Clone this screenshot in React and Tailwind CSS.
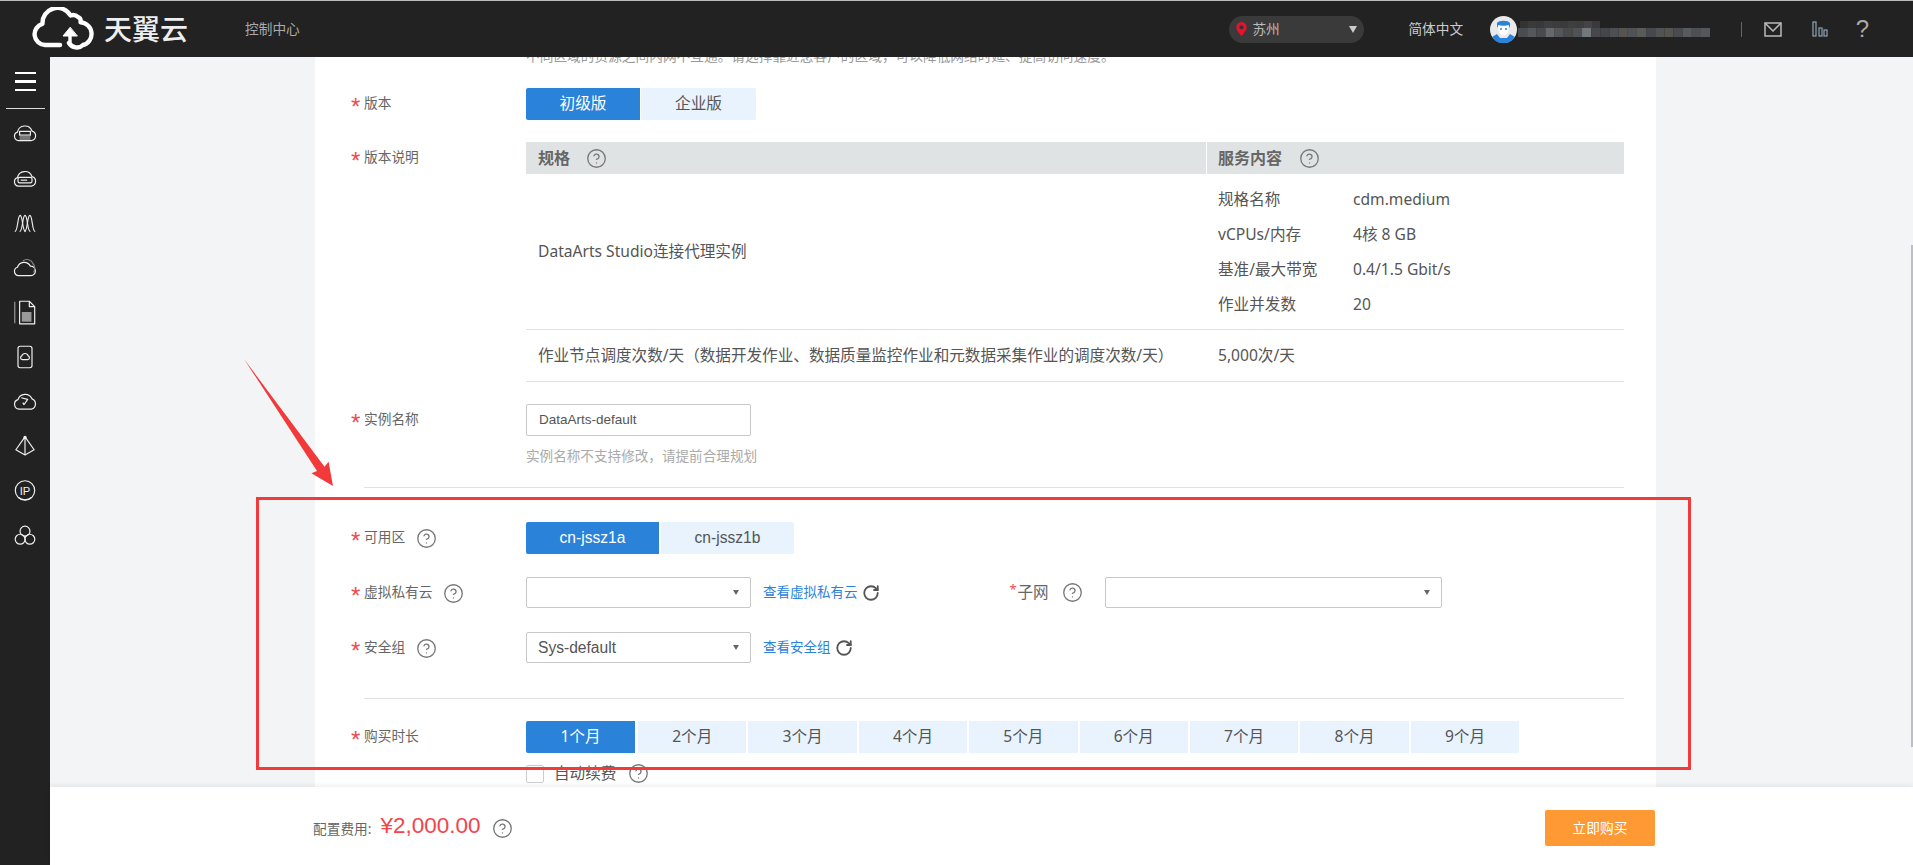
import { CircleHelp, RotateCw } from "lucide-react";

const SANS = "font-['Noto_Sans','Noto_Sans_CJK_SC',sans-serif]";
const ARIAL = "font-['Liberation_Sans','Noto_Sans_CJK_SC',sans-serif]";

const MONTHS = ["1个月", "2个月", "3个月", "4个月", "5个月", "6个月", "7个月", "8个月", "9个月"];

const SPECS = [
  ["规格名称", "cdm.medium"],
  ["vCPUs/内存", "4核 8 GB"],
  ["基准/最大带宽", "0.4/1.5 Gbit/s"],
  ["作业并发数", "20"],
];

// username mosaic in the header
const MOSAIC_TOP = ["#333", "#3a3a3a", "#383838", "#3f3f3f", "#3c3c3c", "#3a3a3a", "#3f3f3f", "#3d3d3d", "#444", "#3a3a3a"];
const MOSAIC_BOTTOM = ["#4a4d50", "#55585a", "#484b4e", "#66686a", "#55565a", "#4a4a48", "#505356", "#75787a", "#48484a", "#45464a", "#4c5054", "#55544f", "#4f5256", "#5a5b58", "#45484c", "#505254", "#55544f", "#4a4b4e", "#585a5c", "#4d4f52", "#55585a"];

function Help({ className = "" }) {
  return <CircleHelp size={21} strokeWidth={1.5} className={`shrink-0 text-[#777] ${className}`} />;
}

function Star() {
  return <span className={`${ARIAL} h-[19px] w-[13px] shrink-0 text-[24px] leading-[24px] text-[#f5484d]`}>*</span>;
}

function Label({ children, help }) {
  return (
    <div className="flex h-[32px] w-[175px] shrink-0 items-center text-[13.7px] text-[#666]">
      <Star />
      <span className="pb-[2px]">{children}</span>
      {help && <Help className="ml-[11px]" />}
    </div>
  );
}

function Select({ value, className = "w-[225px]" }) {
  return (
    <div className={`flex h-[31px] items-center justify-between rounded-[2px] border border-[#c8c8c8] bg-white pl-[11px] pr-[11px] ${className}`}>
      <span className={`${ARIAL} text-[15.6px] text-[#555]`}>{value}</span>
      <span className="h-0 w-0 border-x-[3.5px] border-t-[5px] border-x-transparent border-t-[#666]" />
    </div>
  );
}

function RefreshLink({ children, className = "" }) {
  return (
    <div className={`ml-[12px] flex items-center text-[13.5px] text-[#2a82d9] ${className}`}>
      <span>{children}</span>
      <RotateCw size={18} strokeWidth={2.4} className="ml-[4px] text-[#555]" />
    </div>
  );
}

function CloudLogo() {
  return (
    <svg width="62" height="44" viewBox="0 0 62 44" fill="none" stroke="#fff" strokeWidth="4.4" strokeLinecap="round" strokeLinejoin="round">
      <path d="M28 38H13A10.8 10.8 0 0 1 10.5 16.800 15 15 0 0 1 38.500 8.500 C41 7.500 44 8 46 10 C48 10.800 49 13 48.600 15.400 A11.500 11.500 0 0 1 51 38 C47 42 40 41 37 36" />
      <path d="M38 35V25" strokeWidth="3.400" />
      <path d="M38 20.500L31 29H45Z" fill="#fff" strokeWidth="1" />
    </svg>
  );
}

function Avatar() {
  return (
    <svg width="27" height="27" viewBox="0 0 27 27">
      <circle cx="13.500" cy="13.500" r="13.500" fill="#e9e9e9" />
      <path d="M2 21a13.500 13.500 0 0 0 23 0l-5-3-3 4h-7l-3-4z" fill="#2a82d9" />
      <path d="M7 12V7c2-3 11-3 13 0v5l-1.500-3c-3 1-7 1-10 0z" fill="#2a82d9" />
      <path d="M8.500 9.500c3 1 7 1 10 0V14c0 7-10 7-10 0z" fill="#fff" />
      <circle cx="11" cy="13" r="1" fill="#2a82d9" />
      <circle cx="16" cy="13" r="1" fill="#2a82d9" />
    </svg>
  );
}

function UserMosaic() {
  return (
    <svg width="192" height="16" viewBox="0 0 192 16">
      {MOSAIC_TOP.map((c, i) => (
        <rect key={i} x={2 + i * 8} y="0" width="8" height="7" fill={c} />
      ))}
      {MOSAIC_BOTTOM.map((c, i) => (
        <rect key={i} x={i * 9.15} y="7" width="9.15" height="9" fill={c} />
      ))}
    </svg>
  );
}

const SIDE_ICONS = [
  <>
    <path d="M6 20a4 4 0 0 1-1-7.800 7 7 0 0 1 13.500-1A4.500 4.500 0 0 1 18 20z" />
    <rect x="7" y="11.500" width="10" height="3.500" />
    <rect x="7" y="15.500" width="10" height="4" fill="#777" stroke="none" />
  </>,
  <>
    <path d="M6 20.500a4 4 0 0 1-1-7.800 7 7 0 0 1 13.500-1 4.500 4.500 0 0 1-.5 8.800z" />
    <rect x="5.500" y="12.500" width="13" height="5" rx="1.500" />
    <path d="M8 15h6" />
  </>,
  <>
    <path d="M2.500 21C5.500 21 5 6 7.500 6S9.500 21 12.500 21" />
    <path d="M7 21C10 21 9.500 6 12 6s2 15 5 15" />
    <path d="M11.500 21C14.500 21 14 6 16.500 6s2 15 5 15" />
  </>,
  <>
    <path d="M6 21a4 4 0 0 1-1-7.800 6.500 6.500 0 0 1 12-1 4.300 4.300 0 0 1 .5 8.800z" />
    <path d="M10 7.500a6 6 0 0 1 9.500 2.500c2 2 2 6 .5 8" stroke="#888" />
  </>,
  <>
    <path d="M7 3h9l5 5v16H7z" />
    <path d="M16 3v5h5" />
    <path d="M2.500 3.500v20" stroke="#999" />
    <rect x="9" y="13" width="9" height="9" fill="#999" stroke="none" />
  </>,
  <>
    <rect x="5.500" y="3" width="13" height="20" rx="2" />
    <path d="M9.500 15.500a1.800 1.800 0 0 1-.4-3.500 3 3 0 0 1 5.800 0 1.800 1.800 0 0 1-.4 3.500z" />
  </>,
  <>
    <path d="M6.500 20.500a4.500 4.500 0 0 1-1-8.800 7 7 0 0 1 13-.7A5 5 0 0 1 18 20.500z" />
    <path d="M8.500 10l6 1.500-3.500 5" />
    <path d="M10 14.500l1 2" />
  </>,
  <>
    <path d="M12 4.500L3.500 16.500l8.500 4.800 8.500-4.800z" />
    <path d="M12 4.500v16.800" />
    <circle cx="12" cy="5" r="1" fill="#fff" />
  </>,
  <>
    <circle cx="12" cy="12.500" r="9" />
    <path d="M6 19c3 2.800 9 2.800 12 0" />
    <text x="12" y="16.500" textAnchor="middle" fontSize="10.500" fontFamily="Liberation Sans" fill="#f0f0f0" stroke="none">IP</text>
  </>,
  <>
    <circle cx="12" cy="8.500" r="4.600" />
    <circle cx="7.500" cy="16" r="4.600" />
    <circle cx="16.500" cy="16" r="4.600" />
  </>,
];

function Sidebar() {
  return (
    <aside className="flex w-[50px] shrink-0 flex-col items-center bg-[#222]">
      <div className="flex h-[52px] w-[39px] flex-col items-center justify-center gap-[6px] border-b border-[#ddd] pb-[2px]">
        <span className="h-[2.500px] w-[21px] bg-white" />
        <span className="h-[2.500px] w-[21px] bg-white" />
        <span className="h-[2.500px] w-[21px] bg-white" />
      </div>
      <div className="mt-[2px] flex flex-col items-center">
        {SIDE_ICONS.map((icon, i) => (
          <div key={i} className="flex h-[44.700px] items-center justify-center">
            <svg width="26" height="28" viewBox="0 0 24 26" fill="none" stroke="#f0f0f0" strokeWidth="1.100" strokeLinejoin="round">
              {icon}
            </svg>
          </div>
        ))}
      </div>
    </aside>
  );
}

function Header() {
  return (
    <header className={`flex h-[57px] shrink-0 items-center border-t border-[#bbb] bg-[#222] ${SANS}`}>
      <div className="ml-[32px] flex h-[44px] items-center">
        <CloudLogo />
        <span className="ml-[10px] text-[28px] font-medium leading-none text-[#eee]">天翼云</span>
      </div>
      <span className="ml-[57px] text-[13.7px] text-[#aaa]">控制中心</span>
      <div className="ml-auto flex items-center">
        <div className="flex h-[27px] w-[135px] items-center rounded-full bg-[#3a3a3a] pl-[7px] pr-[7px]">
          <svg width="11" height="14" viewBox="0 0 11 14">
            <path d="M5.500 0a5.200 5.200 0 0 0-5.200 5.200C.3 9 5.500 14 5.500 14s5.200-5 5.200-8.800A5.200 5.200 0 0 0 5.500 0z" fill="#e8112d" />
            <circle cx="5.500" cy="5.200" r="2" fill="#333" />
          </svg>
          <span className="ml-[5px] text-[13.7px] text-[#bbb]">苏州</span>
          <span className="ml-auto h-0 w-0 border-x-[4px] border-t-[7px] border-x-transparent border-t-[#ccc]" />
        </div>
        <span className="ml-[44px] text-[13.7px] text-[#ccc]">简体中文</span>
        <div className="ml-[27px]">
          <Avatar />
        </div>
        <div className="ml-[1px]">
          <UserMosaic />
        </div>
        <span className="ml-[31px] h-[15px] w-px bg-[#666]" />
        <svg className="ml-[22px]" width="18" height="15" viewBox="0 0 18 15" fill="none" stroke="#bbb" strokeWidth="1.500">
          <rect x="1" y="1" width="16" height="13" />
          <path d="M1 1l8 8 8-8" />
        </svg>
        <svg className="ml-[30px]" width="16" height="16" viewBox="0 0 16 16" fill="none" stroke="#8fa3b5" strokeWidth="1.200">
          <rect x="1" y="1" width="3" height="14" />
          <rect x="7" y="7" width="3" height="8" />
          <rect x="12" y="9" width="3" height="6" />
        </svg>
        <span className={`${ARIAL} ml-[27.500px] mr-[44px] text-[24px] leading-none text-[#aaa]`}>?</span>
      </div>
    </header>
  );
}

function SpecTable() {
  return (
    <div className="w-[1098px] text-[15.6px] text-[#555]">
      <div className="grid h-[32px] grid-cols-[680px_1fr] font-bold text-[#666]">
        <div className="flex items-center bg-[#e0e3e4] pl-[12px]">
          <span className="text-[16px]">规格</span>
          <Help className="ml-[16px]" />
        </div>
        <div className="ml-px flex items-center bg-[#e0e3e4] pl-[11px]">
          <span className="text-[16px]">服务内容</span>
          <Help className="ml-[17px]" />
        </div>
      </div>
      <div className="grid h-[156px] grid-cols-[680px_1fr] items-center border-b border-[#e2e2e2]">
        <div className="pl-[12px]">DataArts Studio连接代理实例</div>
        <div className="pl-[12px] pt-[2px]">
          {SPECS.map(([k, v]) => (
            <div key={k} className="flex h-[35px] items-center">
              <span className="w-[135px]">{k}</span>
              <span>{v}</span>
            </div>
          ))}
        </div>
      </div>
      <div className="grid h-[52px] grid-cols-[680px_1fr] items-center border-b border-[#e2e2e2]">
        <div className="pl-[12px]">作业节点调度次数/天（数据开发作业、数据质量监控作业和元数据采集作业的调度次数/天）</div>
        <div className="pl-[12px]">5,000次/天</div>
      </div>
    </div>
  );
}

function Tab({ active, className = "", children }) {
  return (
    <div className={`flex h-[32px] items-center justify-center text-[15.6px] ${active ? "bg-[#2a82d9] text-white" : "bg-[#e8f3fd] text-[#555]"} ${className}`}>
      {children}
    </div>
  );
}

function Form() {
  return (
    <div className={`ml-[265px] w-[1341px] bg-white pb-[40px] pl-[36px] pr-[32px] ${SANS}`}>
      <div className="-mt-[11px] ml-[175px] h-[20px] text-[13.7px] leading-[20px] text-[#999]">
        不同区域的资源之间内网不互通。请选择靠近您客户的区域，可以降低网络时延、提高访问速度。
      </div>

      <div className="mt-[22px] flex">
        <Label>版本</Label>
        <div className="flex gap-px">
          <Tab active className="w-[114px] rounded-l-[2px]">初级版</Tab>
          <Tab className="w-[115px] rounded-r-[2px]">企业版</Tab>
        </div>
      </div>

      <div className="mt-[22px] flex">
        <Label>版本说明</Label>
        <SpecTable />
      </div>

      <div className="mt-[22px] flex">
        <Label>实例名称</Label>
        <div>
          <div className={`flex h-[32px] w-[225px] items-center rounded-[2px] border border-[#c8c8c8] pl-[12px] text-[13.500px] text-[#555] ${ARIAL}`}>
            DataArts-default
          </div>
          <div className="mt-[10px] text-[13.6px] leading-[20px] text-[#aaa]">实例名称不支持修改，请提前合理规划</div>
        </div>
      </div>

      <div className="ml-[13px] mt-[21px] border-t border-[#e2e2e2]" />

      <div className="mt-[34px] flex">
        <Label help>可用区</Label>
        <div className={`flex gap-[2px] ${ARIAL}`}>
          <Tab active className="w-[133px] rounded-l-[2px]">cn-jssz1a</Tab>
          <Tab className="w-[133px] rounded-r-[2px]">cn-jssz1b</Tab>
        </div>
      </div>

      <div className="mt-[23px] flex items-start">
        <Label help>虚拟私有云</Label>
        <div className="flex items-center">
          <Select />
          <RefreshLink>查看虚拟私有云</RefreshLink>
          <div className="ml-[130px] flex h-[31px] w-[96px] items-center text-[15.500px] text-[#666]">
            <span className="mb-[6px] mr-[1px] w-[7px] text-[13px] leading-none text-[#f5484d]">*</span>
            <span>子网</span>
            <Help className="ml-[13px]" />
          </div>
          <Select className="ml-[-1px] w-[337px]" />
        </div>
      </div>

      <div className="mt-[23px] flex items-start">
        <Label help>安全组</Label>
        <div className="flex items-center">
          <Select value="Sys-default" />
          <RefreshLink>查看安全组</RefreshLink>
        </div>
      </div>

      <div className="ml-[13px] mt-[34px] border-t border-[#e2e2e2]" />

      <div className="mt-[22px] flex">
        <Label>购买时长</Label>
        <div className="flex gap-[2px]">
          {MONTHS.map((m, i) => (
            <Tab key={m} active={i === 0} className={i === 0 ? "mr-[1px] w-[109px] rounded-l-[2px]" : "w-[108.400px]"}>
              {m}
            </Tab>
          ))}
        </div>
      </div>

      <div className="ml-[175px] mt-[9px] flex items-center">
        <span className="h-[18px] w-[18px] rounded-[2px] border border-[#ccc]" />
        <span className="ml-[10px] text-[15.6px] text-[#555]">自动续费</span>
        <Help className="ml-[12px]" />
      </div>
    </div>
  );
}

function Footer() {
  return (
    <footer className={`relative z-10 flex h-[78px] shrink-0 items-center bg-white pl-[263px] pr-[258px] shadow-[0_-2px_4px_rgba(0,0,0,0.06)] ${SANS}`}>
      <span className="mt-[6px] text-[13.7px] text-[#666]">配置费用:</span>
      <span className={`${ARIAL} ml-[9px] text-[22.500px] text-[#f3434b]`}>¥2,000.00</span>
      <Help className="ml-[11px] mt-[5px]" />
      <button type="button" className="ml-auto mt-[4px] h-[36px] w-[110px] rounded-[2px] bg-[#ff9933] text-[13.7px] text-white">
        立即购买
      </button>
    </footer>
  );
}

function Annotation() {
  return (
    <>
      <svg className="pointer-events-none absolute left-[240px] top-[355px] z-20" width="100" height="135" viewBox="0 0 100 135">
        <path d="M4 4L84.500 111.700 88.600 106.700 93 131 71.400 118.300 77 116Z" fill="#f33a3a" />
      </svg>
      <div className="pointer-events-none absolute left-[256px] top-[497px] z-20 h-[273px] w-[1435px] border-[3px] border-[#f33a3a]" />
      <div className="absolute left-[1911px] top-[245px] h-[502px] w-[2px] bg-[#bcc0c4]" />
    </>
  );
}

export default function App() {
  return (
    <div className="relative flex h-[865px] w-[1913px] flex-col overflow-hidden bg-[#f3f4f6]">
      <Header />
      <div className="flex min-h-0 flex-1">
        <Sidebar />
        <div className="flex min-w-0 flex-1 flex-col">
          <main className="min-h-0 flex-1 overflow-hidden">
            <Form />
          </main>
          <Footer />
        </div>
      </div>
      <Annotation />
    </div>
  );
}
